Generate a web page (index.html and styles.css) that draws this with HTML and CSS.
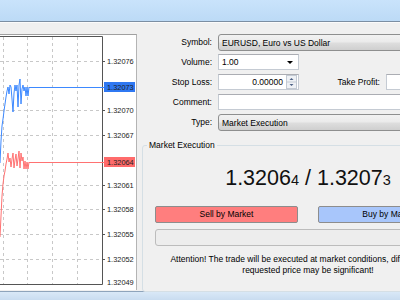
FILE: index.html
```html
<!DOCTYPE html>
<html lang="en">
<head>
    <meta charset="UTF-8">
    <meta name="viewport" content="width=device-width, initial-scale=1.0">
    <title>Order</title>
    <link rel="stylesheet" href="styles.css">
</head>
<body>
    <div class="titlebar"></div>

    <div class="content">
        <div class="chart-pane">
            <svg class="chart" width="137" height="255" viewBox="0 34 137 255">
                <!-- grid -->
                <g stroke="#c8c8c8" stroke-width="1" stroke-dasharray="3 3">
                    <line x1="3.5" y1="36" x2="3.5" y2="283"/>
                    <line x1="27.5" y1="36" x2="27.5" y2="283"/>
                    <line x1="52.5" y1="36" x2="52.5" y2="283"/>
                    <line x1="77.5" y1="36" x2="77.5" y2="283"/>
                    <line x1="0" y1="60.5" x2="102" y2="60.5"/>
                    <line x1="0" y1="109.5" x2="102" y2="109.5"/>
                    <line x1="0" y1="134.5" x2="102" y2="134.5"/>
                    <line x1="0" y1="184.5" x2="102" y2="184.5"/>
                    <line x1="0" y1="208.5" x2="102" y2="208.5"/>
                    <line x1="0" y1="233.5" x2="102" y2="233.5"/>
                    <line x1="0" y1="258.5" x2="102" y2="258.5"/>
                </g>
                <!-- frame -->
                <path d="M0 35.5 H102.5 V283.5 H0" fill="none" stroke="#555" stroke-width="1"/>
                <g stroke="#555" stroke-width="1">
                    <line x1="102" y1="60.5" x2="105" y2="60.5"/>
                    <line x1="102" y1="109.5" x2="105" y2="109.5"/>
                    <line x1="102" y1="134.5" x2="105" y2="134.5"/>
                    <line x1="102" y1="184.5" x2="105" y2="184.5"/>
                    <line x1="102" y1="208.5" x2="105" y2="208.5"/>
                    <line x1="102" y1="233.5" x2="105" y2="233.5"/>
                    <line x1="102" y1="258.5" x2="105" y2="258.5"/>
                </g>
                <!-- bid -->
                <path d="M0 236 L1 215 L2 195 L3 183 L4 175 L5 170 L6 163 L7 158 L8 152 L9 161 L10 157 L11 166 L12 158 L13 152 L14 167 L15 159 L16 153 L17 165 L18 158 L19 150 L20 167 L21 152 L22 160 L23 156 L24 168 L25 160 L26 168 L27 161 L28 168 L29 161"
                      fill="none" stroke="#ff7272" stroke-width="1"/>
                <line x1="29" y1="161.5" x2="104" y2="161.5" stroke="#ff7272" stroke-width="1"/>
                <!-- ask -->
                <path d="M0 162 L1 140 L2 125 L3 118 L4 110 L5 103 L6 96 L7 90 L8 86 L9 93 L10 84 L11 86 L12 98 L13 111 L14 92 L15 84 L16 90 L17 84 L18 106 L19 84 L20 78 L21 103 L22 88 L23 84 L24 90 L25 86 L26 95 L27 86 L28 95 L29 86"
                      fill="none" stroke="#3d89ff" stroke-width="1"/>
                <line x1="29" y1="86.5" x2="104" y2="86.5" stroke="#3d89ff" stroke-width="1"/>
                <!-- price scale -->
                <g class="scale">
                    <text x="107" y="63">1.32076</text>
                    <rect x="104" y="81" width="31" height="10" fill="#2f78f2"/>
                    <text x="107" y="89" fill="#fff">1.32073</text>
                    <text x="107" y="112">1.32070</text>
                    <text x="107" y="137">1.32067</text>
                    <rect x="104" y="156" width="31" height="10" fill="#ff6b6b"/>
                    <text x="107" y="164" fill="#fff">1.32064</text>
                    <text x="107" y="187">1.32061</text>
                    <text x="107" y="211">1.32058</text>
                    <text x="107" y="236">1.32055</text>
                    <text x="107" y="261">1.32052</text>
                    <text x="107" y="284">1.32049</text>
                </g>
            </svg>
        </div>

        <div class="order-pane">
            <div class="row">
                <span class="label">Symbol:</span>
                <div class="combo wide">EURUSD, Euro vs US Dollar</div>
            </div>
            <div class="row">
                <span class="label">Volume:</span>
                <div class="input narrow">
                    <span class="value">1.00</span>
                    <span class="arrow"></span>
                </div>
            </div>
            <div class="row">
                <span class="label">Stop Loss:</span>
                <div class="input narrow">
                    <span class="value right">0.00000</span>
                    <svg class="spinner" width="11" height="14" viewBox="0 0 11 14">
                        <rect x="0.5" y="0.5" width="10" height="13" fill="#eef1f5" stroke="#c3cad3"/>
                        <line x1="1" y1="7" x2="10" y2="7" stroke="#c3cad3"/>
                        <path d="M3.5 5 L5.5 3 L7.5 5 Z" fill="#4d6185"/>
                        <path d="M3.5 9 L5.5 11 L7.5 9 Z" fill="#4d6185"/>
                    </svg>
                </div>
                <span class="label side">Take Profit:</span>
                <div class="input narrow"></div>
            </div>
            <div class="row">
                <span class="label">Comment:</span>
                <div class="input wide"></div>
            </div>
            <div class="row">
                <span class="label">Type:</span>
                <div class="combo wide">Market Execution</div>
            </div>

            <fieldset class="group">
                <legend>Market Execution</legend>
                <div class="quote">1.3206<span class="pip">4</span> / 1.3207<span class="pip">3</span></div>
                <div class="buttons">
                    <div class="btn sell">Sell by Market</div>
                    <div class="btn buy">Buy by Market</div>
                </div>
                <div class="progress"></div>
                <p class="note">Attention! The trade will be executed at market conditions, difference with<br>requested price may be significant!</p>
            </fieldset>
        </div>
    </div>

    <div class="statusbar"></div>
</body>
</html>
```

FILE: styles.css
```css
html, body {
    margin: 0;
    padding: 0;
    overflow: hidden;
}
body {
    width: 400px;
    height: 300px;
    font-family: "Liberation Sans", Arial, sans-serif;
    font-size: 8.5px;
    color: #000;
    background: #f0f0f0;
}
.titlebar {
    height: 21px;
    background: linear-gradient(#c9e3fb, #bcdaf6);
    border-bottom: 1px solid #7c8fa3;
}
.content {
    display: flex;
    height: 269px;
    padding-top: 11px;
    box-sizing: border-box;
    border-top: 1px solid #fbfbfb;
}
.chart-pane {
    flex: none;
    width: 137px;
    height: 256px;
    background: #fff;
    border-top: 1px solid #a0a0a0;
    border-right: 1px solid #b4b4b4;
    box-sizing: border-box;
    overflow: hidden;
}
.chart {
    display: block;
}
.scale text {
    font-family: "Liberation Sans", Arial, sans-serif;
    font-size: 7.4px;
    fill: #222;
}
.order-pane {
    flex: none;
    width: 337px;
}
.row {
    display: flex;
    align-items: flex-start;
    height: 20px;
}
.label {
    flex: none;
    width: 75px;
    margin-right: 6px;
    text-align: right;
    line-height: 17px;
}
.label.side {
    width: 81px;
}
.combo,
.input {
    flex: none;
    display: flex;
    align-items: center;
    box-sizing: border-box;
    height: 17px;
    padding: 0 3px;
    white-space: nowrap;
}
.combo {
    border: 1px solid #8e8f8f;
    border-radius: 3px;
    background: linear-gradient(#f2f2f2 0%, #ebebeb 45%, #dddddd 55%, #cfcfcf 100%);
}
.input {
    height: 16px;
    background: #fff;
    border: 1px solid #c5cbd3;
    border-top-color: #abadb3;
}
.wide {
    width: 249px;
}
.narrow {
    width: 81px;
}
.value {
    flex: 1;
}
.value.right {
    text-align: right;
    padding-right: 3px;
}
.arrow {
    width: 0;
    height: 0;
    margin-right: 2px;
    border-left: 3px solid transparent;
    border-right: 3px solid transparent;
    border-top: 3px solid #000;
}
.spinner {
    display: block;
    margin-right: -2px;
}
.group {
    width: 332px;
    box-sizing: border-box;
    margin: 6px 0 0 5px;
    padding: 0 12px 15px;
    border: 1px solid #d5dfe5;
    border-radius: 3px;
    min-width: 0;
}
.group legend {
    margin-left: -8px;
    padding: 0 2px;
    line-height: 10px;
}
.quote {
    margin-top: 14px;
    text-align: center;
    font-size: 21.5px;
    line-height: 28px;
    color: #111;
}
.pip {
    font-size: 14.5px;
}
.buttons {
    display: flex;
    gap: 20px;
    margin-top: 12px;
}
.btn {
    width: 143px;
    height: 17px;
    box-sizing: border-box;
    border: 1px solid #8d8d8d;
    border-radius: 2px;
    text-align: center;
    line-height: 15px;
}
.sell {
    background: #ff7e7e;
}
.buy {
    background: #a8c6fb;
}
.progress {
    height: 17px;
    margin-top: 6px;
    box-sizing: border-box;
    border: 1px solid #bcbcbc;
    border-radius: 3px;
    background: #ededed;
}
.note {
    margin: 8px 0 0;
    text-align: center;
    line-height: 11px;
    white-space: nowrap;
}
.statusbar {
    height: 9px;
    border-top: 1px solid #8ea4bb;
    background: linear-gradient(#d9e8f7, #c7dbef);
}
```
